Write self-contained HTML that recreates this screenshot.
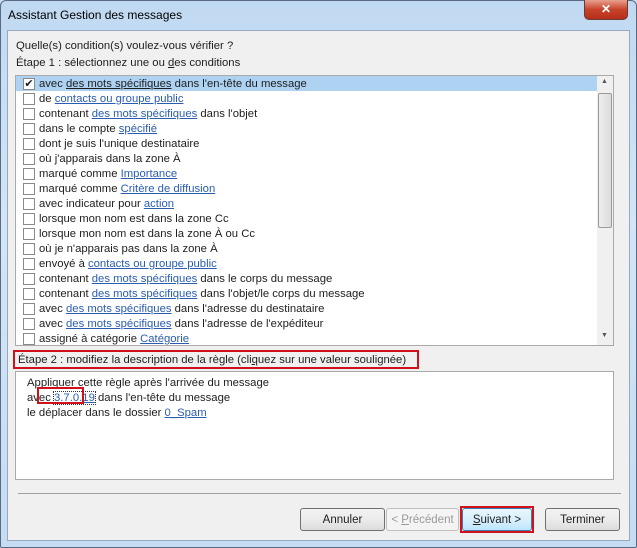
<!DOCTYPE html>
<html><head><meta charset="utf-8"><style>
*{margin:0;padding:0;box-sizing:border-box}
body{width:637px;height:548px;overflow:hidden;background:#c9dff4;font-family:"Liberation Sans",sans-serif;font-size:11.3px;color:#1e1e1e;position:relative}
.frame{position:absolute;left:0;top:0;width:637px;height:548px;background:linear-gradient(#c0d9f2,#d3e5f7 40%,#c6dcf3);border:1px solid #5a6a80;border-radius:6px 6px 2px 2px}
.title{position:absolute;left:8px;top:8px;font-size:12px;color:#000}
.close{position:absolute;left:584px;top:0;width:44px;height:20px;background:linear-gradient(#e8a18f,#c7432a 50%,#b52f1b);border:1px solid #6b3a33;border-top:none;border-radius:0 0 5px 5px;color:#fff;font-weight:bold;text-align:center;font-size:12px;line-height:19px}
.panel{position:absolute;left:7px;top:30px;width:623px;height:511px;background:#f0f0f0;border:1px solid #96a9c0}
.abs{position:absolute;white-space:nowrap}
a{color:#2a5db0;text-decoration:underline}
.list{position:absolute;left:15px;top:75px;width:599px;height:271px;background:#fff;border:1px solid #aaa}
.row{position:absolute;left:0;height:15px;width:581px;line-height:16px;padding-left:23px}
.row i{position:absolute;left:7px;top:2px;width:12px;height:12px;border:1px solid #8a8a8a;background:#fff}
.sel{background:#aed2f2}
.sb{position:absolute;left:581px;top:0;width:16px;height:269px;background:#f0f0f0}
.thumb{position:absolute;left:1px;top:17px;width:14px;height:135px;border:1px solid #9a9a9a;border-radius:2px;background:linear-gradient(90deg,#eee,#dcdcdc)}
.desc{position:absolute;left:15px;top:371px;width:599px;height:109px;background:#fff;border:1px solid #aaa;padding:4px 0 0 11px;line-height:15px}
.btn{position:absolute;top:508px;height:23px;border:1px solid #707070;border-radius:3px;background:linear-gradient(#f2f2f2,#ebebeb 50%,#dcdcdc);text-align:center;line-height:23px;font-size:11.5px}
</style></head><body>
<div class="frame"></div>
<div class="title">Assistant Gestion des messages</div>
<div class="close">✕</div>
<div class="panel"></div>
<div class="abs" style="left:16px;top:40px">Quelle(s) condition(s) voulez-vous vérifier ?</div>
<div class="abs" style="left:16px;top:57px">Étape 1 : sélectionnez une ou <u>d</u>es conditions</div>
<div class="list">
<div class="row sel" style="top:0"><i style="font-style:normal;font-size:11px;line-height:10px;text-align:center">✔</i>avec <u>des mots spécifiques</u> dans l'en-tête du message</div>
<div class="row" style="top:15px"><i></i>de <a>contacts ou groupe public</a></div>
<div class="row" style="top:30px"><i></i>contenant <a>des mots spécifiques</a> dans l'objet</div>
<div class="row" style="top:45px"><i></i>dans le compte <a>spécifié</a></div>
<div class="row" style="top:60px"><i></i>dont je suis l'unique destinataire</div>
<div class="row" style="top:75px"><i></i>où j'apparais dans la zone À</div>
<div class="row" style="top:90px"><i></i>marqué comme <a>Importance</a></div>
<div class="row" style="top:105px"><i></i>marqué comme <a>Critère de diffusion</a></div>
<div class="row" style="top:120px"><i></i>avec indicateur pour <a>action </a></div>
<div class="row" style="top:135px"><i></i>lorsque mon nom est dans la zone Cc</div>
<div class="row" style="top:150px"><i></i>lorsque mon nom est dans la zone À ou Cc</div>
<div class="row" style="top:165px"><i></i>où je n'apparais pas dans la zone À</div>
<div class="row" style="top:180px"><i></i>envoyé à <a>contacts ou groupe public</a></div>
<div class="row" style="top:195px"><i></i>contenant <a>des mots spécifiques</a> dans le corps du message</div>
<div class="row" style="top:210px"><i></i>contenant <a>des mots spécifiques</a> dans l'objet/le corps du message</div>
<div class="row" style="top:225px"><i></i>avec <a>des mots spécifiques</a> dans l'adresse du destinataire</div>
<div class="row" style="top:240px"><i></i>avec <a>des mots spécifiques</a> dans l'adresse de l'expéditeur</div>
<div class="row" style="top:255px"><i></i>assigné à catégorie <a>Catégorie</a></div>
<div class="sb"><div class="abs" style="left:4px;top:2px;font-size:7px;color:#555">▲</div><div class="thumb"></div><div class="abs" style="left:4px;top:256px;font-size:7px;color:#555">▼</div></div>
</div>
<div class="abs" style="left:13px;top:350px;width:406px;height:19px;border:2px solid #d0101a;padding-left:3px;line-height:16px">Étape 2 : modifiez la description de la règle (cli<u>q</u>uez sur une valeur soulignée)</div>
<div class="desc">Appliquer cette règle après l'arrivée du message<br>avec <a style="outline:1px dotted #333">3.7.0.19</a> dans l'en-tête du message<br>le déplacer dans le dossier <a>0_Spam</a></div>
<div class="abs" style="left:37px;top:387px;width:47px;height:17px;border:2px solid #d0101a"></div>
<div class="abs" style="left:18px;top:493px;width:603px;height:1px;background:#a0a0a0"></div>
<div class="btn" style="left:300px;width:85px">Annuler</div>
<div class="btn" style="left:386px;width:73px;color:#9a9a9a;border-color:#c0c0c0;background:#f4f4f4">&lt; <u>P</u>récédent</div>
<div class="btn" style="left:462px;width:70px;border-color:#3c7fb1;background:linear-gradient(#eaf6fd,#d9f0fc 50%,#bee6fd)"><u>S</u>uivant &gt;</div>
<div class="abs" style="left:460px;top:506px;width:74px;height:27px;border:2px solid #d0101a"></div>
<div class="btn" style="left:545px;width:75px">Terminer</div>
</body></html>
